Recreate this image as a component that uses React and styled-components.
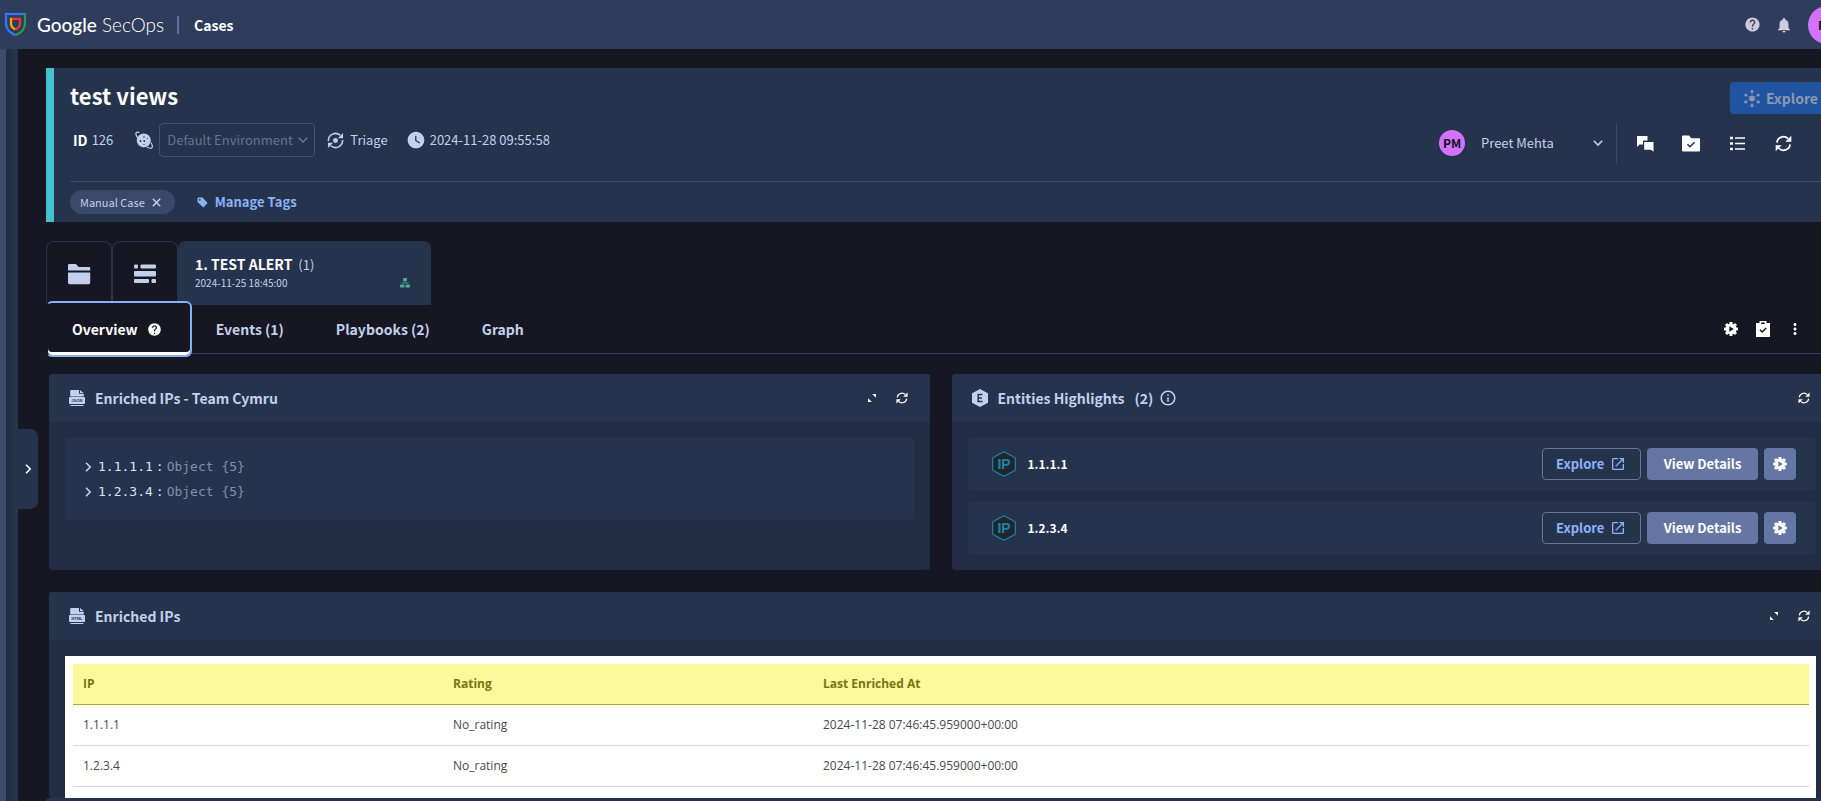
import React from "react";
import styled, { createGlobalStyle, css } from "styled-components";
import {
  MdHelp,
  MdNotifications,
  MdMoreVert,
  MdOpenInNew,
  MdOutlineInfo,
  MdWatchLater,
} from "react-icons/md";

const color = {
  page: "#171623",
  bar: "#2f3d5c",
  surface: "#26334d",
  panel: "#222c44",
  raised: "#3b4b6c",
  line: "#3a4869",
  text: "#c3d0ec",
  white: "#ffffff",
  link: "#8ab1fa",
  button: "#6476a3",
  teal: "#44c2cf",
  avatar: "#d272ff",
};

const sans = `"Noto Sans CJK SC", "Noto Sans", sans-serif`;

const GlobalStyle = createGlobalStyle`
  *, *::before, *::after { box-sizing: border-box; }
  body {
    margin: 0;
    background: ${color.page};
    color: ${color.text};
    font: 13px/20px ${sans};
  }
  button, select { font: inherit; }
  h1, h2, p { margin: 0; }
  svg { display: block; flex: none; }
`;

/* ---------- icons ---------- */

const ShieldLogo = () => (
  <svg width="23" height="25" viewBox="0 0 23 25" fill="none" strokeWidth="2.2">
    <path d="M2 2v9.500c0 5.500 3.700 9.300 9.500 11.800" stroke="#2f7df6" />
    <path d="M.9 2h19" stroke="#2f7df6" />
    <path d="M21 .9v10.600c0 5.500-3.700 9.300-9.500 11.800" stroke="#1ea04c" />
    <path d="M7 5.800v6c0 2.600 1.600 4.300 4.500 5.800" stroke="#f9ab00" />
    <path d="M8.100 6.900H16v4.900c0 2.600-1.600 4.300-4.500 5.800" stroke="#ea3a2d" />
  </svg>
);

const Refresh = ({ size = 18 }) => (
  <svg width={size} height={size} viewBox="0 0 18 18" fill="none" stroke="currentColor" strokeWidth="1.800">
    <path d="M2 8a7 7 0 0 1 12-4" />
    <path d="M16 10a7 7 0 0 1-12 4" />
    <path d="M17.300.8v6.400h-6.400z" fill="currentColor" stroke="none" />
    <path d="M.7 17.200v-6.400h6.400z" fill="currentColor" stroke="none" />
  </svg>
);

const StageIcon = () => (
  <svg width="17" height="17" viewBox="0 0 18 18" fill="none" stroke="currentColor" strokeWidth="1.600">
    <path d="M1.500 9.500A7.500 7.500 0 0 1 14 3.500" />
    <path d="M16.500 8.500A7.500 7.500 0 0 1 4 14.500" />
    <path d="M17 1v5.500h-5.500z" fill="currentColor" stroke="none" />
    <path d="M1 17v-5.500h5.500z" fill="currentColor" stroke="none" />
    <circle cx="9" cy="9" r="2.600" fill="currentColor" stroke="none" />
  </svg>
);

const Chevron = ({ direction = "down", size = 10 }) => (
  <svg width={size} height={size} viewBox="0 0 10 10" fill="none" stroke="currentColor" strokeWidth="1.600">
    <path d={direction === "down" ? "M.8 2.800 5 7l4.200-4.200" : "M3 .8 7.200 5 3 9.200"} />
  </svg>
);

const Gear = ({ hole }) => (
  <svg width="16" height="16" viewBox="0 0 16 16" fill="currentColor">
    <circle cx="8" cy="8" r="5.400" />
    {[0, 45, 90, 135].map((angle) => (
      <rect key={angle} x="6.500" y="1" width="3" height="14" rx=".4" transform={`rotate(${angle} 8 8)`} />
    ))}
    <path d="M6.300 5.300v5.400L10.800 8z" fill={hole} />
  </svg>
);

const Planet = () => (
  <svg width="18" height="19" viewBox="0 0 18 19" fill="currentColor">
    <circle cx="8.800" cy="9.400" r="7" />
    <path d="M4.500 1.500C2 .5.500 1.300 1 3.600c.3 1.300 1 2.200 1.600 3" fill="none" stroke="currentColor" strokeWidth="1.200" />
    <path d="M16 11.500c1.300 2.200 1.700 4.500.8 5.300-.9.800-3 .3-5-.8" fill="none" stroke="currentColor" strokeWidth="1.200" />
    <g fill={color.surface}>
      <circle cx="9" cy="6" r=".8" />
      <circle cx="5.500" cy="10" r=".9" />
      <circle cx="9.300" cy="10" r=".9" />
      <circle cx="12.500" cy="7.500" r=".6" />
      <circle cx="9" cy="13.500" r=".6" />
    </g>
  </svg>
);

const TagIcon = () => (
  <svg width="11" height="11" viewBox="0 0 11 11" fill="currentColor">
    <path fillRule="evenodd" d="M.5 1.500a1 1 0 0 1 1-1h4L10.600 6 6.400 10.500.5 5zM2.800 1.900a.9.9 0 1 0 0 1.800.9.900 0 0 0 0-1.800z" />
  </svg>
);

const HubIcon = () => (
  <svg width="16" height="17" viewBox="0 0 16 17" fill="currentColor" stroke="currentColor">
    <circle cx="8" cy="8.500" r="2.800" stroke="none" />
    <path d="M8 2v13M2 5l12 7M14 5 2 12" strokeWidth=".5" />
    <g stroke="none">
      <circle cx="8" cy="1.600" r="1.500" />
      <circle cx="8" cy="15.400" r="1.500" />
      <circle cx="1.700" cy="4.900" r="1.500" />
      <circle cx="14.300" cy="4.900" r="1.500" />
      <circle cx="1.700" cy="12.100" r="1.500" />
      <circle cx="14.300" cy="12.100" r="1.500" />
    </g>
  </svg>
);

const ChatIcon = () => (
  <svg width="17" height="17" viewBox="0 0 17 17" fill="currentColor">
    <path d="M0 1h10.500v4.500H6v4H2.500L0 12z" />
    <path d="M7.200 7h9.300v9.800L14 14.800H7.200z" />
  </svg>
);

const FolderCheckIcon = () => (
  <svg width="18" height="17" viewBox="0 0 18 17">
    <path d="M0 1.500C0 .9.400.5 1 .5h6l2.200 2.700H17c.6 0 1 .4 1 1v11c0 .7-.5 1.300-1.300 1.300H1.300C.5 16.500 0 15.900 0 15.200z" fill="currentColor" />
    <path d="m5.500 9.300 2.500 2.500 4.500-4.600" fill="none" stroke={color.surface} strokeWidth="1.500" />
  </svg>
);

const ListIcon = () => (
  <svg width="15" height="15" viewBox="0 0 15 15" stroke="currentColor">
    <path d="M0 2h3M0 7.500h3M0 13h3" strokeWidth="2.600" />
    <path d="M5 2h10M5 7.500h10M5 13h10" strokeWidth="1.600" />
  </svg>
);

const ClipboardIcon = () => (
  <svg width="14" height="16" viewBox="0 0 14 16">
    <path fillRule="evenodd" d="M0 2h3.500V0h7v2H14v14H0zM5.200 1.500v1.600h3.600V1.500z" fill="currentColor" />
    <path d="m4 8.800 2.200 2.200 4-4" fill="none" stroke={color.page} strokeWidth="1.500" />
  </svg>
);

const FolderIcon = () => (
  <svg width="24" height="22" viewBox="0 0 24 22" fill="currentColor">
    <path d="M1 7.500V2.300C1 1.500 1.500 1 2.300 1h6.500l3 3H22c.7 0 1.200.5 1.200 1.200v2.300z" />
    <path d="M1 9.500h22.200v10c0 1-.7 1.700-1.700 1.700H2.700C1.700 21.200 1 20.500 1 19.500z" />
  </svg>
);

const RowsIcon = () => (
  <svg width="22" height="20" viewBox="0 0 22 20" fill="currentColor">
    <rect y=".5" width="4" height="4" rx="1" />
    <rect x="6.500" y=".5" width="15.500" height="4" rx="1" />
    <rect y="7" width="22" height="5.500" rx="1" />
    <rect y="15" width="15" height="4" rx="1" />
    <rect x="17.500" y="15" width="4.500" height="4" rx="1" />
  </svg>
);

const NetworkIcon = () => (
  <svg width="10" height="10" viewBox="0 0 10 10" fill="#4fa893">
    <rect x="3" width="4" height="3" rx=".5" />
    <path d="M4.600 3.300h.8v1.200h3v1.300h-.8v-.5H2.400v.5h-.8V4.500h3z" />
    <rect y="6.400" width="4.400" height="3" rx=".5" />
    <rect x="5.600" y="6.400" width="4.400" height="3" rx=".5" />
  </svg>
);

const FileIcon = ({ kind }) => (
  <svg width="16" height="16" viewBox="0 0 16 16" fill="currentColor">
    <path d="M1.200 6.500V1C1.200.4 1.600 0 2.200 0H10v3.700h4.800v2.800z" />
    <path d="M11 0l3.700 3H11z" />
    <rect y="7" width="16" height="7" rx=".8" />
    <path d="M1.500 15h13v1h-13z" />
    <text x="8" y="12" textAnchor="middle" fontSize="4" fontWeight="700" fontFamily="Liberation Sans, sans-serif" fill={color.surface}>
      {kind}
    </text>
  </svg>
);

const ExpandIcon = () => (
  <svg width="8" height="8" viewBox="0 0 8 8" fill="currentColor">
    <path d="M4.200 0H8v3.800zM0 4.200 3.800 8H0z" />
  </svg>
);

const EntityBadge = () => (
  <svg width="16" height="18" viewBox="0 0 16 18">
    <path d="M8 0l8 4.300v9.400L8 18l-8-4.300V4.300z" fill="currentColor" />
    <path d="M10.500 5.500H6.200v7h4.300M6.200 9h3.800" fill="none" stroke={color.surface} strokeWidth="1.500" />
  </svg>
);

const IpHexagon = () => (
  <svg width="24" height="26" viewBox="0 0 24 26">
    <path d="M12 .8l11.300 6v12.400L12 25.200.7 19.200V6.800z" fill="#20262b" stroke="#1f82ae" strokeWidth="1.200" />
    <text x="12" y="18" textAnchor="middle" fontSize="14" fontFamily="Liberation Sans, sans-serif" fill="#1f82ae">
      IP
    </text>
  </svg>
);

const CloseIcon = () => (
  <svg width="9" height="9" viewBox="0 0 9 9" stroke="currentColor" strokeWidth="1.500">
    <path d="M.8.8l7.400 7.400M8.200.8.800 8.200" />
  </svg>
);

/* ---------- shared controls ---------- */

const IconButton = styled.button`
  display: grid;
  place-items: center;
  width: ${(p) => p.$size || 32}px;
  height: ${(p) => p.$size || 32}px;
  padding: 0;
  border: 0;
  border-radius: 4px;
  background: ${(p) => (p.$filled ? color.button : "transparent")};
  color: ${(p) => p.$tone || color.white};
  cursor: pointer;
`;

const Avatar = styled.span`
  display: grid;
  place-items: center;
  flex: none;
  width: ${(p) => p.$size}px;
  height: ${(p) => p.$size}px;
  border-radius: 50%;
  background: ${color.avatar};
  color: #14101c;
  font-size: 12px;
  font-weight: 700;
`;

/* ---------- top bar ---------- */

const TopBar = styled.header`
  display: flex;
  align-items: center;
  height: 49px;
  padding-left: 4px;
  overflow: hidden;
  background: ${color.bar};
`;

const Brand = styled.a`
  display: flex;
  align-items: center;
  gap: 10px;
  color: ${color.white};
  font: 300 19px/24px Lato, sans-serif;
  text-decoration: none;
  b { font-weight: 500; }
`;

const Section = styled.span`
  display: flex;
  align-items: center;
  gap: 15px;
  margin-left: 13px;
  color: ${color.white};
  font-size: 14px;
  font-weight: 700;
  &::before {
    content: "";
    width: 2px;
    height: 18px;
    background: #5d709f;
  }
`;

const TopActions = styled.div`
  display: flex;
  align-items: center;
  margin: 0 -25px 0 auto;
  ${Avatar} { margin-left: 8px; }
`;

/* ---------- page frame ---------- */

const Body = styled.div`
  display: flex;
  min-height: calc(100vh - 49px);
`;

const Rail = styled.aside`
  position: relative;
  flex: none;
  width: 18px;
  border-left: 6px solid ${color.raised};
  background: linear-gradient(90deg, #1f2a42, ${color.surface} 8px);
`;

const RailToggle = styled.button`
  position: absolute;
  top: 380px;
  left: 100%;
  display: grid;
  place-items: center;
  width: 20px;
  height: 80px;
  padding: 0;
  border: 0;
  border-radius: 0 8px 8px 0;
  background: ${color.surface};
  color: ${color.white};
`;

const Main = styled.main`
  flex: 1;
  min-width: 0;
  padding: 19px 0 0 28px;
  overflow: hidden;
`;

const Canvas = styled.div`
  margin-right: -11px;
`;

/* ---------- case header ---------- */

const CaseCard = styled.section`
  padding: 14px 0 8px 16px;
  border-left: 8px solid ${color.teal};
  background: ${color.surface};
`;

const TitleRow = styled.div`
  display: flex;
  justify-content: space-between;
  h1 {
    color: ${color.white};
    font-size: 22px;
    font-weight: 700;
    line-height: 26px;
  }
`;

const ExploreCase = styled.button`
  display: flex;
  align-items: center;
  gap: 6px;
  height: 32px;
  padding: 0 14px;
  border: 0;
  border-radius: 4px;
  background: #2154a0;
  color: #8c98ae;
  font-size: 14px;
  font-weight: 700;
`;

const MetaRow = styled.div`
  display: flex;
  align-items: flex-start;
  justify-content: space-between;
  height: 68px;
  padding: 9px 33px 0 3px;
  border-bottom: 1px solid ${color.line};
`;

const MetaGroup = styled.div`
  display: flex;
  align-items: center;
`;

const Meta = styled.span`
  display: flex;
  align-items: center;
  gap: ${(p) => p.$gap || 6}px;
  margin-right: ${(p) => p.$after || 0}px;
  b { color: ${color.white}; font-size: 14px; }
`;

const SelectBox = styled.span`
  position: relative;
  display: flex;
  align-items: center;
  select {
    width: ${(p) => p.$width}px;
    height: 34px;
    padding: 0 18px 0 7px;
    border: 1px solid ${(p) => (p.$bordered ? "#42517a" : "transparent")};
    border-radius: 4px;
    background: transparent;
    color: inherit;
    opacity: 1;
    appearance: none;
  }
  svg {
    position: absolute;
    right: 7px;
    pointer-events: none;
  }
  ${(p) => p.$bordered && css`color: #66728e;`}
`;

const Owner = styled(MetaGroup)`
  height: 40px;
  gap: 8px;
  margin-right: 12px;
  padding-right: 6px;
  border-right: 1px solid ${color.line};
`;

const CaseActions = styled(MetaGroup)`
  gap: 14px;
`;

const TagRow = styled.div`
  display: flex;
  align-items: center;
  gap: 22px;
  padding-top: 8px;
`;

const Chip = styled.span`
  display: flex;
  align-items: center;
  gap: 2px;
  height: 24px;
  padding: 0 8px 0 10px;
  border-radius: 12px;
  background: #3a4969;
  font-size: 11px;
`;

const TagLink = styled.button`
  display: flex;
  align-items: center;
  gap: 7px;
  padding: 0;
  border: 0;
  background: none;
  color: ${color.link};
  font-size: 13px;
  font-weight: 700;
`;

/* ---------- alert tabs ---------- */

const AlertStrip = styled.div`
  display: flex;
  height: 64px;
  margin-top: 19px;
`;

const StripTab = styled.button`
  display: grid;
  place-items: center;
  width: 66px;
  padding: 0;
  border: 1px solid ${color.surface};
  border-bottom: 0;
  border-radius: 8px 8px 0 0;
  background: transparent;
  color: ${color.text};
`;

const AlertTab = styled.button`
  display: flex;
  align-items: flex-end;
  justify-content: space-between;
  width: 253px;
  padding: 0 21px 14px 17px;
  border: 0;
  border-radius: 8px 8px 0 0;
  background: ${color.surface};
  color: ${color.text};
  text-align: left;
  strong { margin-right: 3px; color: ${color.white}; font-size: 14px; }
  small { display: block; font-size: 10px; line-height: 16px; }
  svg { margin-bottom: 3px; }
`;

const ViewBar = styled.div`
  display: flex;
  align-items: center;
  justify-content: space-between;
  height: 49px;
  padding-right: 21px;
  border-bottom: 1px solid #323e66;
`;

const ViewTabs = styled.nav`
  display: flex;
  align-items: center;
`;

const ViewTab = styled.button`
  display: flex;
  align-items: center;
  gap: 9px;
  height: 40px;
  padding: 0 26px;
  border: 0;
  background: transparent;
  color: ${color.text};
  font-size: 14px;
  font-weight: 700;
  ${(p) =>
    p.$active &&
    css`
      height: 56px;
      margin-right: -2px;
      padding: 0 28px 0 24px;
      border: 2px solid #87b0fb;
      border-left-color: transparent;
      border-radius: 6px;
      background: ${color.page};
      box-shadow: inset 0 -3px ${color.white};
      color: ${color.white};
    `}
`;

/* ---------- widgets ---------- */

const Widgets = styled.div`
  display: grid;
  grid-template-columns: 1fr 1fr;
  gap: 22px;
  padding: 20px 0 0 3px;
`;

const Panel = styled.section`
  grid-column: ${(p) => (p.$wide ? "1 / -1" : "auto")};
  border-radius: 3px;
  background: ${color.panel};
  overflow: hidden;
`;

const PanelHead = styled.div`
  display: flex;
  align-items: center;
  justify-content: space-between;
  height: 48px;
  padding: 0 13px 0 20px;
  background: ${color.surface};
`;

const PanelTitle = styled.h2`
  display: flex;
  align-items: center;
  gap: 10px;
  font-size: 14px;
  font-weight: 700;
  line-height: 20px;
`;

const Count = styled.span`
  display: flex;
  align-items: center;
  gap: 6px;
`;

const PanelTools = styled.div`
  display: flex;
`;

const PanelBody = styled.div`
  display: flex;
  flex-direction: column;
  gap: 12px;
  padding: 16px;
  ${(p) => p.$flush && css`padding-bottom: 0;`}
`;

const JsonTree = styled.div`
  padding: 16px 18px;
  border-radius: 3px;
  background: ${color.surface};
  font: 13px/25px "DejaVu Sans Mono", monospace;
`;

const JsonRow = styled.button`
  display: flex;
  align-items: center;
  gap: 3px;
  height: 25px;
  padding: 0;
  border: 0;
  background: none;
  color: ${color.text};
  svg { margin-right: 2px; }
  b { color: #d6e3fa; font-weight: 400; }
  span { color: #8390ac; }
`;

const EntityRow = styled.div`
  display: flex;
  align-items: center;
  gap: 6px;
  height: 52px;
  padding: 0 20px 0 24px;
  border-radius: 3px;
  background: ${color.surface};
`;

const EntityName = styled.span`
  display: flex;
  align-items: center;
  gap: 12px;
  margin-right: auto;
  color: ${color.white};
  font-size: 12px;
  font-weight: 700;
`;

const ExploreLink = styled.a`
  display: flex;
  align-items: center;
  justify-content: space-between;
  width: 99px;
  height: 32px;
  padding: 0 14px 0 13px;
  border: 1px solid ${color.button};
  border-radius: 4px;
  color: ${color.link};
  font-weight: 700;
  text-decoration: none;
`;

const DetailsButton = styled.button`
  width: 111px;
  height: 32px;
  padding: 0;
  border: 0;
  border-radius: 4px;
  background: ${color.button};
  color: ${color.white};
  font-weight: 700;
`;

const TableSheet = styled.div`
  padding: 8px 7px 11px 8px;
  background: ${color.white};
`;

const Table = styled.table`
  width: 100%;
  border-collapse: separate;
  border-spacing: 0;
  table-layout: fixed;
  color: #47494f;
  font: 12px/20px "Open Sans", sans-serif;
  th, td {
    height: 41px;
    padding: 0 10px;
    border-bottom: 1px solid #d0d6ea;
    text-align: left;
  }
  th {
    border-bottom-color: #b0aa2c;
    background: #fbf99c;
    color: #7c7413;
    font-weight: 700;
  }
  th:nth-child(-n + 2) { width: 370px; }
`;

const Drawer = styled.div`
  height: 3px;
  border-radius: 3px 3px 0 0;
  background: ${color.surface};
`;

const entities = ["1.1.1.1", "1.2.3.4"];
const stamp = "2024-11-28 07:46:45.959000+00:00";

function PanelHeader({ icon, title, expandable, children }) {
  return (
    <PanelHead>
      <PanelTitle>
        {icon}
        {title}
        {children}
      </PanelTitle>
      <PanelTools>
        {expandable && (
          <IconButton $size={30} aria-label="Expand"><ExpandIcon /></IconButton>
        )}
        <IconButton $size={30} aria-label="Refresh"><Refresh size={12} /></IconButton>
      </PanelTools>
    </PanelHead>
  );
}

export default function App() {
  return (
    <>
      <GlobalStyle />
      <TopBar>
        <Brand href="#">
          <ShieldLogo />
          <span><b>Google</b> SecOps</span>
        </Brand>
        <Section>Cases</Section>
        <TopActions>
          <IconButton $tone="#cdcbdc" aria-label="Help"><MdHelp size={17} /></IconButton>
          <IconButton $tone="#cdcbdc" aria-label="Notifications"><MdNotifications size={18} /></IconButton>
          <Avatar $size={38}>PM</Avatar>
        </TopActions>
      </TopBar>
      <Body>
        <Rail>
          <RailToggle aria-label="Open case queue"><Chevron direction="right" /></RailToggle>
        </Rail>
        <Main>
          <Canvas>
            <CaseCard>
              <TitleRow>
                <h1>test views</h1>
                <ExploreCase disabled><HubIcon />Explore</ExploreCase>
              </TitleRow>
              <MetaRow>
                <MetaGroup>
                  <Meta $gap={4} $after={22}><b>ID</b> 126</Meta>
                  <Meta $after={12}>
                    <Planet />
                    <SelectBox $width={156} $bordered>
                      <select aria-label="Environment" disabled>
                        <option>Default Environment</option>
                      </select>
                      <Chevron />
                    </SelectBox>
                  </Meta>
                  <Meta $after={18}><StageIcon />Triage</Meta>
                  <Meta $gap={4}><MdWatchLater size={20} />2024-11-28 09:55:58</Meta>
                </MetaGroup>
                <MetaGroup>
                  <Owner>
                    <Avatar $size={26}>PM</Avatar>
                    <SelectBox $width={137}>
                      <select aria-label="Assigned to">
                        <option>Preet Mehta</option>
                      </select>
                      <Chevron />
                    </SelectBox>
                  </Owner>
                  <CaseActions>
                    <IconButton aria-label="Chat"><ChatIcon /></IconButton>
                    <IconButton aria-label="Close case"><FolderCheckIcon /></IconButton>
                    <IconButton aria-label="Actions"><ListIcon /></IconButton>
                    <IconButton aria-label="Refresh case"><Refresh size={17} /></IconButton>
                  </CaseActions>
                </MetaGroup>
              </MetaRow>
              <TagRow>
                <Chip>
                  Manual Case
                  <IconButton $size={20} $tone={color.text} aria-label="Remove tag"><CloseIcon /></IconButton>
                </Chip>
                <TagLink><TagIcon />Manage Tags</TagLink>
              </TagRow>
            </CaseCard>

            <AlertStrip>
              <StripTab aria-label="Case overview"><FolderIcon /></StripTab>
              <StripTab aria-label="Case wall"><RowsIcon /></StripTab>
              <AlertTab>
                <span>
                  <strong>1. TEST ALERT</strong> (1)
                  <small>2024-11-25 18:45:00</small>
                </span>
                <NetworkIcon />
              </AlertTab>
            </AlertStrip>
            <ViewBar>
              <ViewTabs>
                <ViewTab $active>Overview <MdHelp size={15} /></ViewTab>
                <ViewTab>Events (1)</ViewTab>
                <ViewTab>Playbooks (2)</ViewTab>
                <ViewTab>Graph</ViewTab>
              </ViewTabs>
              <PanelTools>
                <IconButton aria-label="Manual action"><Gear hole={color.page} /></IconButton>
                <IconButton aria-label="Tasks"><ClipboardIcon /></IconButton>
                <IconButton aria-label="More"><MdMoreVert size={18} /></IconButton>
              </PanelTools>
            </ViewBar>

            <Widgets>
              <Panel>
                <PanelHeader icon={<FileIcon kind="JSON" />} title="Enriched IPs - Team Cymru" expandable />
                <PanelBody>
                  <JsonTree>
                    {entities.map((ip) => (
                      <JsonRow key={ip}>
                        <Chevron direction="right" />
                        <b>{ip}</b>
                        <b>:</b>
                        <span>Object {"{5}"}</span>
                      </JsonRow>
                    ))}
                  </JsonTree>
                </PanelBody>
              </Panel>
              <Panel>
                <PanelHeader icon={<EntityBadge />} title="Entities Highlights">
                  <Count>(2) <MdOutlineInfo size={18} /></Count>
                </PanelHeader>
                <PanelBody>
                  {entities.map((ip) => (
                    <EntityRow key={ip}>
                      <EntityName><IpHexagon />{ip}</EntityName>
                      <ExploreLink href="#">Explore <MdOpenInNew size={16} /></ExploreLink>
                      <DetailsButton>View Details</DetailsButton>
                      <IconButton $filled aria-label="Entity actions"><Gear hole={color.button} /></IconButton>
                    </EntityRow>
                  ))}
                </PanelBody>
              </Panel>
              <Panel $wide>
                <PanelHeader icon={<FileIcon kind="HTML" />} title="Enriched IPs" expandable />
                <PanelBody $flush>
                  <TableSheet>
                    <Table>
                      <thead>
                        <tr><th>IP</th><th>Rating</th><th>Last Enriched At</th></tr>
                      </thead>
                      <tbody>
                        {entities.map((ip) => (
                          <tr key={ip}><td>{ip}</td><td>No_rating</td><td>{stamp}</td></tr>
                        ))}
                      </tbody>
                    </Table>
                  </TableSheet>
                </PanelBody>
              </Panel>
            </Widgets>
            <Drawer />
          </Canvas>
        </Main>
      </Body>
    </>
  );
}
